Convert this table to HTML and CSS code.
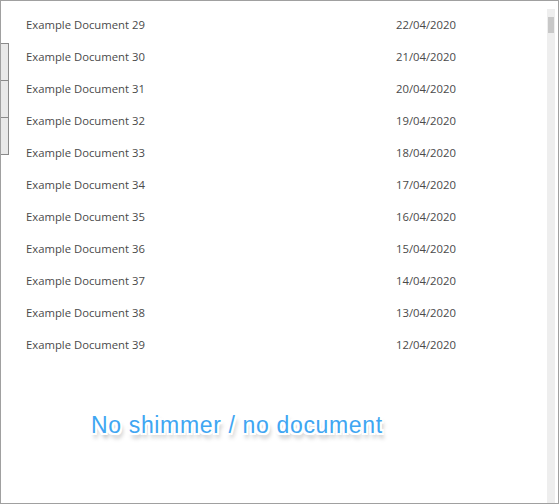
FILE: index.html
```html
<!DOCTYPE html>
<html>
<head>
<meta charset="utf-8">
<link rel="stylesheet" href="styles.css">
</head>
<body>
<div class="frame">
  <div class="tabs">
    <div class="tab"></div>
    <div class="tab"></div>
    <div class="tab"></div>
  </div>
  <div class="list">
    <div class="row"><span class="name">Example Document 29</span><span class="date">22/04/2020</span></div>
    <div class="row"><span class="name">Example Document 30</span><span class="date">21/04/2020</span></div>
    <div class="row"><span class="name">Example Document 31</span><span class="date">20/04/2020</span></div>
    <div class="row"><span class="name">Example Document 32</span><span class="date">19/04/2020</span></div>
    <div class="row"><span class="name">Example Document 33</span><span class="date">18/04/2020</span></div>
    <div class="row"><span class="name">Example Document 34</span><span class="date">17/04/2020</span></div>
    <div class="row"><span class="name">Example Document 35</span><span class="date">16/04/2020</span></div>
    <div class="row"><span class="name">Example Document 36</span><span class="date">15/04/2020</span></div>
    <div class="row"><span class="name">Example Document 37</span><span class="date">14/04/2020</span></div>
    <div class="row"><span class="name">Example Document 38</span><span class="date">13/04/2020</span></div>
    <div class="row"><span class="name">Example Document 39</span><span class="date">12/04/2020</span></div>
  </div>
  <div class="scrollbar"><div class="thumb"></div></div>
  <div class="note">No shimmer / no document</div>
</div>
</body>
</html>
```

FILE: styles.css
```css
html, body {
  margin: 0;
  padding: 0;
  background: #ffffff;
}
.frame {
  position: relative;
  box-sizing: border-box;
  width: 559px;
  height: 504px;
  border: 1px solid #a0a0a0;
  display: flex;
  font-family: "Open Sans", "Noto Sans", sans-serif;
}
.tabs {
  width: 8px;
  padding-top: 42px;
  display: flex;
  flex-direction: column;
}
.tab {
  box-sizing: border-box;
  height: 38px;
  width: 8px;
  background: #e9e9e9;
  border: 1px solid #8a8a8a;
  border-left: none;
  margin-top: -1px;
}
.tab:first-child {
  margin-top: 0;
}
.list {
  flex: 1;
  padding-top: 7px;
  padding-left: 17px;
}
.row {
  height: 32px;
  display: flex;
  align-items: center;
  font-size: 11.3px;
  color: #4a4a4a;
}
.name {
  width: 370px;
}
.scrollbar {
  width: 8px;
  margin-top: 8px;
  margin-right: 3px;
  background: #eeeeee;
}
.thumb {
  margin: 8px 1px 0 1px;
  height: 16px;
  background: #c8c8c8;
}
.note {
  position: absolute;
  left: 90px;
  top: 411px;
  font-family: "Liberation Sans", Arial, sans-serif;
  font-size: 23px;
  letter-spacing: 0.65px;
  color: #3fa6f2;
  text-shadow:
    -2px 0 0 #fff, 2px 0 0 #fff, 0 -2px 0 #fff, 0 2px 0 #fff,
    -2px -2px 0 #fff, 2px -2px 0 #fff, -2px 2px 0 #fff, 2px 2px 0 #fff,
    2px 5px 4px rgba(0,0,0,0.35);
}
```
